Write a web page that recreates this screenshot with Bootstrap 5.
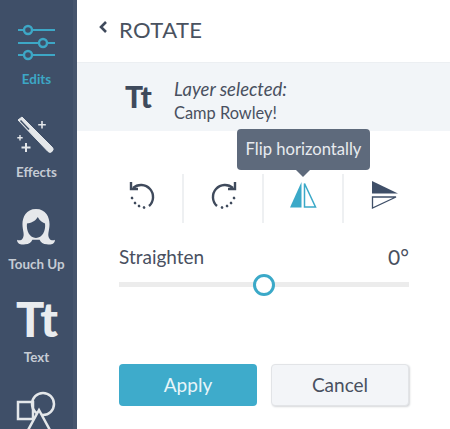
<!DOCTYPE html>
<html><head><meta charset="utf-8">
<link href="https://cdn.jsdelivr.net/npm/bootstrap@5.3.0/dist/css/bootstrap.min.css" rel="stylesheet">
<style>
html,body{width:450px;height:429px;overflow:hidden;margin:0;background:#fff;font-family:Lato,"Open Sans",sans-serif;color:#49505f}
.shell{height:429px}
.rail{width:77px;flex:none;background:#3f4f68;border-right:4px solid #46556d;height:429px;overflow:hidden;padding-top:21px}
.rail-item{height:92.5px;flex:none;color:#c5cbd4;font-size:13.4px;font-weight:700;line-height:15px}
.rail-item svg{display:block;flex:none}
.rail-active{color:#3da7c6}
.rail-glyph{height:51px}
.rail-tt{font-size:47px;font-weight:900;color:#e9ecef;line-height:40px;letter-spacing:-1px}
.rail-hair{padding-top:3px}
.pane{flex:1;min-width:0;position:relative}
.pane-head{height:63px;padding:17px 0 0 22px;color:#49525f;font-size:22px;line-height:26px;letter-spacing:.4px;border-bottom:1px solid #eceff2}
.pane-head svg{margin-right:11px;margin-top:-3px}
.layer-band{height:68px;background:#f2f5f8;padding-left:48px}
.layer-tt{width:49px;font-size:30px;font-weight:900;color:#3f4a5c;line-height:30px;letter-spacing:-.5px;margin-top:-2px}
.layer-text{padding-top:8px}
.layer-a{font-size:18.5px;font-style:italic;line-height:24px;color:#49505f}
.layer-b{font-size:16.4px;line-height:24px;color:#49505f}
.tool-row{margin:43px 0 0 27px;width:320px;height:49px}
.tool-cell{width:80px;height:49px;border-right:2px solid #eef0f2;padding-bottom:8px}
.tool-cell:last-child{border-right:0}
.tip-box{position:absolute;left:160px;top:129px;width:133px;height:41px;background:#5e6a7c;color:#e8ebef;border-radius:4px;font-size:16.6px;line-height:41px;text-align:center}
.tip-box::after{content:"";position:absolute;left:59px;top:41px;border:7px solid transparent;border-top-color:#5e6a7c;border-bottom:0}
.str-row{margin:22px 41px 0 42px;font-size:19px;line-height:24px;color:#49505f}
.str-val{font-size:21px}
.str-track{height:5px;background:#ececec;margin:13px 41px 0 42px;position:relative}
.str-thumb{position:absolute;left:133.5px;top:-8.5px;width:22px;height:22px;border:3px solid #3ba9c8;border-radius:50%;background:#fff}
.act-row{margin:77px 41px 0 42px}
.act-btn{height:42px;width:138px;border-radius:4px;font-size:19px;line-height:42px;padding:0;text-align:center}
.act-ok{background:#3eabcb;color:#e8f5f9;border:0}
.act-no{background:#f3f5f8;color:#49505f;border:1px solid #e2e4e7;box-shadow:1px 1px 2px #d5d7da;line-height:40px}
</style></head><body>
<div class="shell d-flex">
<nav class="rail d-flex flex-column align-items-center">
 <div class="rail-item rail-active d-flex flex-column align-items-center">
  <div class="rail-glyph"><svg width="40" height="42" viewBox="0 0 40 42" fill="none" stroke="#3da7c6"><path d="M1 9H38M1 22H38M1 34H38" stroke-width="2.200"/><g stroke-width="2.400" fill="#3f4f68"><circle cx="11" cy="9" r="4"/><circle cx="26" cy="22" r="4"/><circle cx="11" cy="34" r="4"/></g></svg></div>
  <span>Edits</span>
 </div>
 <div class="rail-item d-flex flex-column align-items-center">
  <div class="rail-glyph"><svg width="40" height="42" viewBox="0 0 40 42" fill="#e4e7ea"><path d="M2 6 6 3 36 33a2.500 2.500 0 0 1 -4 4.500Z" stroke="#e4e7ea"/><path d="M4.500 6.500 13 15.500" stroke="#3f4f68" stroke-width="1.500"/><path d="M25.200 7h1.600v3h3v1.600h-3v3h-1.600v-3h-3V10h3ZM3.300 21h1.400v2h2v1.400h-2v2H3.300v-2h-2V23h2ZM9 29h2v3.500h3.500v2H11V38H9v-3.500H5.500v-2H9Z"/></svg></div>
  <span>Effects</span>
 </div>
 <div class="rail-item d-flex flex-column align-items-center">
  <div class="rail-glyph rail-hair"><svg width="40" height="37" viewBox="0 0 44 41"><path d="M22 0C11 0 7 9 7 17c0 7 3 12 0 16-1 2-5 2-6 1 0 5 5 6 9 5 4 0 7-2 8-5h8c1 3 4 5 8 5 4 1 9 0 9-5-1 1-5 1-6-1-3-4 0-9 0-16C37 9 33 0 22 0Z" fill="#e6e8eb"/><path d="M12 16c4 0 9-2 12-7 2 4 5 6 8 7 1 8-3 16-10 16S11 24 12 16Z" fill="#3f4f68"/></svg></div>
  <span>Touch Up</span>
 </div>
 <div class="rail-item d-flex flex-column align-items-center">
  <div class="rail-glyph rail-tt">Tt</div>
  <span>Text</span>
 </div>
 <div class="rail-item d-flex flex-column align-items-center">
  <svg width="42" height="38" viewBox="0 0 42 38" fill="none" stroke="#e4e7ea" stroke-width="2.500"><rect x="2" y="11" width="15" height="17"/><circle cx="27" cy="13" r="11"/><path d="M23 19 11 41h24Z" fill="#3f4f68"/></svg>
 </div>
</nav>
<main class="pane">
 <div class="pane-head d-flex align-items-start"><svg width="9" height="26" viewBox="0 0 9 26" fill="none" stroke="#3f4a5c" stroke-width="2.600"><path d="M7 8 2 13 7 18"/></svg><span>ROTATE</span></div>
 <div class="layer-band d-flex align-items-center">
  <div class="layer-tt">Tt</div>
  <div class="layer-text"><div class="layer-a">Layer selected:</div><div class="layer-b">Camp Rowley!</div></div>
 </div>
 <div class="tool-row d-flex">
  <div class="tool-cell d-flex align-items-center justify-content-center"><svg width="30" height="30" viewBox="0 0 30 30" fill="none" stroke="#3f4a5c" stroke-width="2.400"><path d="M5 8A12 12 0 1 1 21 26"/><path d="M3 2V9H10"/><path d="M4 18l.1.1M7 23l.1.1M11 26l.1.1M16 27.500l.1.1" stroke-width="2.600" stroke-linecap="round"/></svg></div>
  <div class="tool-cell d-flex align-items-center justify-content-center"><svg width="30" height="30" viewBox="0 0 30 30" fill="none" stroke="#3f4a5c" stroke-width="2.400"><path d="M25 8A12 12 0 1 0 9 26"/><path d="M27 2V9H20"/><path d="M26 18l.1.1M23 23l.1.1M19 26l.1.1M14 27.500l.1.1" stroke-width="2.600" stroke-linecap="round"/></svg></div>
  <div class="tool-cell d-flex align-items-center justify-content-center"><svg width="28" height="26" viewBox="0 0 28 26"><path d="M12.500 0V25.500H1Z" fill="#3ba9c8"/><path d="M15.500 1.500V25H26.500Z" fill="#fff" stroke="#3ba9c8" stroke-width="1.500"/></svg></div>
  <div class="tool-cell d-flex align-items-center justify-content-center"><svg width="27" height="28" viewBox="0 0 27 28"><path d="M1 0 27 12.500H1Z" fill="#3f4f68"/><path d="M1.500 16H25L1.500 27Z" fill="#fff" stroke="#3f4f68" stroke-width="1.300"/></svg></div>
 </div>
 <div class="tip-box">Flip horizontally</div>
 <div class="str-row d-flex justify-content-between"><span>Straighten</span><span class="str-val">0°</span></div>
 <div class="str-track"><div class="str-thumb"></div></div>
 <div class="act-row d-flex justify-content-between">
  <button type="button" class="btn act-btn act-ok">Apply</button>
  <button type="button" class="btn act-btn act-no">Cancel</button>
 </div>
</main>
</div>
<script src="https://cdn.jsdelivr.net/npm/bootstrap@5.3.0/dist/js/bootstrap.bundle.min.js"></script>
</body></html>
